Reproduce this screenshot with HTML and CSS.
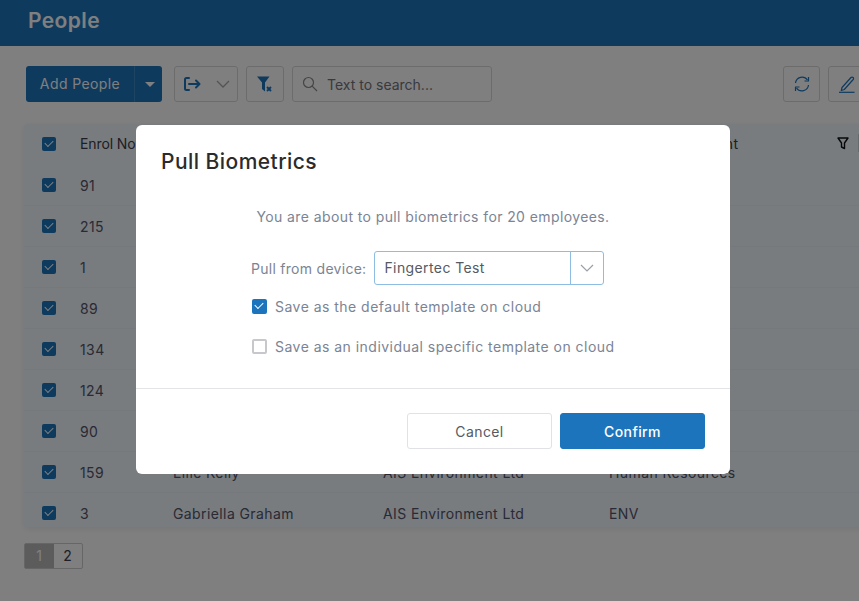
FILE: index.html
```html
<!DOCTYPE html>
<html lang="en">

<head>
  <meta charset="UTF-8">
  <meta name="viewport" content="width=device-width, initial-scale=1.0">
  <title>People</title>
  <link rel="stylesheet" href="styles.css">
</head>

<body>
  <header class="page-header">
    <h1>People</h1>
  </header>

  <main class="content">
    <div class="toolbar">
      <div class="split-btn">
        <span class="split-btn_label">Add People</span>
        <span class="split-btn_caret"></span>
      </div>
      <div class="tool-btn tool-btn--export">
        <svg width="20" height="16" viewBox="0 0 20 16" fill="none" stroke="#1c75bc" stroke-width="2" stroke-linecap="round" stroke-linejoin="round">
          <path d="M6 2H3.500C2.600 2 2 2.600 2 3.500v9c0 .9.6 1.500 1.500 1.500H6" />
          <path d="M6 8h10M13 4.500 16.500 8 13 11.500" />
        </svg>
        <svg width="14" height="8" viewBox="0 0 14 8" fill="none" stroke="#a8a8a8" stroke-width="1.300">
          <path d="M1 1l6 6 6-6" />
        </svg>
      </div>
      <div class="tool-btn tool-btn--filter">
        <svg width="18" height="18" viewBox="0 0 18 18">
          <path d="M1 1.500h12.500L9 7.500V16.500L6 14V7.500z" fill="#1c75bc" />
          <path d="M11 12l4 4M15 12l-4 4" stroke="#1c75bc" stroke-width="1.800" />
        </svg>
      </div>
      <div class="search">
        <svg width="16" height="16" viewBox="0 0 16 16" fill="none" stroke="#8a8a8a" stroke-width="1.200">
          <circle cx="6.500" cy="6.500" r="5" />
          <path d="M10.200 10.200 15 15" />
        </svg>
        <span>Text to search...</span>
      </div>
      <div class="toolbar_right">
        <div class="tool-btn tool-btn--square">
          <svg width="18" height="18" viewBox="0 0 18 18" fill="none" stroke="#1c75bc" stroke-width="1.200">
            <path d="M2.500 8A6.600 6.600 0 0 1 14.500 5" />
            <path d="M15.500 10A6.600 6.600 0 0 1 3.500 13" />
            <path d="M15.500 2v4h-4M2.500 16v-4h4" stroke-linejoin="round" />
          </svg>
        </div>
        <div class="tool-btn tool-btn--square">
          <svg width="18" height="18" viewBox="0 0 18 18" fill="none" stroke="#1c75bc" stroke-width="1.200">
            <path d="M4 12.500 13 2.500c.7-.6 1.500-.5 2.100 0s.6 1.400.1 2L6.300 14.500l-3 1z" stroke-linejoin="round" />
            <path d="M1 17.300h15.500" />
          </svg>
        </div>
      </div>
    </div>

    <div class="grid">
      <div class="grid_row grid_row--head">
        <span class="check"></span><span>Enrol No</span><span></span><span></span><span class="grid_wide">Home Department</span>
        <svg class="grid_filter" width="12" height="13" viewBox="0 0 12 13" fill="none" stroke="#111" stroke-width="1.400" stroke-linejoin="round">
          <path d="M1 1h10L7.500 6v5.500l-3-1.500V6z" />
        </svg>
        <span class="grid_resizer"></span>
      </div>
      <div class="grid_row"><span class="check"></span><span>91</span><span></span><span></span><span></span></div>
      <div class="grid_row"><span class="check"></span><span>215</span><span></span><span></span><span></span></div>
      <div class="grid_row"><span class="check"></span><span>1</span><span></span><span></span><span></span></div>
      <div class="grid_row"><span class="check"></span><span>89</span><span></span><span></span><span></span></div>
      <div class="grid_row"><span class="check"></span><span>134</span><span></span><span></span><span></span></div>
      <div class="grid_row"><span class="check"></span><span>124</span><span></span><span></span><span></span></div>
      <div class="grid_row"><span class="check"></span><span>90</span><span></span><span></span><span></span></div>
      <div class="grid_row"><span class="check"></span><span>159</span><span>Ellie Kelly</span><span>AIS Environment Ltd</span><span>Human Resources</span></div>
      <div class="grid_row"><span class="check"></span><span>3</span><span>Gabriella Graham</span><span>AIS Environment Ltd</span><span>ENV</span></div>
    </div>

    <div class="pager">
      <span class="pager_item pager_item--active">1</span>
      <span class="pager_item">2</span>
    </div>
  </main>

  <div class="overlay"></div>

  <section class="modal">
    <h2 class="modal_title">Pull Biometrics</h2>
    <div class="modal_body">
      <p class="modal_text">You are about to pull biometrics for 20 employees.</p>
      <div class="device-row">
        <label class="device-row_label">Pull from device:</label>
        <div class="select">
          <span class="select_value">Fingertec Test</span>
          <span class="select_arrow">
            <svg width="14" height="8" viewBox="0 0 14 8" fill="none" stroke="#9a9fa8" stroke-width="1.200">
              <path d="M1 1l6 6 6-6" />
            </svg>
          </span>
        </div>
      </div>
      <div class="option">
        <span class="check check--on"></span>
        <span>Save as the default template on cloud</span>
      </div>
      <div class="option">
        <span class="check check--off"></span>
        <span>Save as an individual specific template on cloud</span>
      </div>
    </div>
    <div class="modal_footer">
      <button class="btn">Cancel</button>
      <button class="btn btn--primary">Confirm</button>
    </div>
  </section>
</body>

</html>
```

FILE: styles.css
```css
* {
  box-sizing: border-box;
  padding: 0;
  margin: 0;
}

html {
  font-family: 'Inter', 'Open Sans', sans-serif;
  font-size: 14px;
  letter-spacing: 0.4px;
}

body {
  width: 859px;
  height: 601px;
  overflow: hidden;
  background-color: #ffffff;
  color: #4f4f60;
}

.page-header {
  height: 46px;
  padding: 8px 28px 0;
  background-color: #1c75bc;
}

.page-header h1 {
  font-size: 21px;
  line-height: 26px;
  font-weight: 600;
  color: #ffffff;
}

.content {
  width: 900px;
  padding: 20px 0 0 24px;
}

.toolbar {
  display: flex;
  gap: 8px;
  height: 36px;
  margin-left: 2px;
  margin-bottom: 22px;
}

.toolbar_right {
  display: flex;
  gap: 8px;
  margin-left: 283px;
}

.split-btn {
  display: flex;
  width: 136px;
  margin-right: 4px;
  border-radius: 3px;
  background-color: #1c75bc;
  color: #ffffff;
}

.split-btn_label {
  width: 109px;
  line-height: 36px;
  text-align: center;
  border-right: 1px solid #3a88c6;
}

.split-btn_caret {
  position: relative;
  flex: 1;
}

.split-btn_caret::after {
  content: "";
  position: absolute;
  left: 10px;
  top: 16px;
  border-left: 5px solid transparent;
  border-right: 5px solid transparent;
  border-top: 5px solid #ffffff;
}

.tool-btn {
  display: flex;
  align-items: center;
  justify-content: center;
  border: 1px solid #d9d9d9;
  border-radius: 3px;
}

.tool-btn--export {
  width: 64px;
  gap: 13px;
}

.tool-btn--filter {
  width: 38px;
}

.tool-btn--square {
  width: 37px;
}

.search {
  display: flex;
  align-items: center;
  gap: 9px;
  width: 200px;
  padding-left: 9px;
  border: 1px solid #d9d9d9;
  border-radius: 3px;
  letter-spacing: 0;
  color: #73737d;
}

.grid {
  width: 876px;
  height: 403px;
  overflow: hidden;
  border-radius: 4px;
  background-color: #f0f8ff;
  color: #54546a;
  box-shadow: 0 2px 6px rgba(0, 0, 0, 0.08);
}

.grid_row {
  position: relative;
  display: grid;
  grid-template-columns: 38px 93px 210px 226px 1fr;
  align-items: center;
  height: 41px;
  padding-left: 18px;
  border-bottom: 1px solid #ebf3fa;
}

.grid_row--head {
  padding-bottom: 2px;
  border-bottom: none;
  letter-spacing: -0.1px;
  color: #3c3c48;
}

.grid_wide {
  letter-spacing: 0.55px;
}

.grid_filter {
  position: absolute;
  left: 813px;
  top: 13px;
}

.grid_resizer {
  position: absolute;
  left: 834px;
  top: 10px;
  width: 1px;
  height: 18px;
  background-color: #cfd6dc;
}

.check {
  position: relative;
  display: block;
  width: 14px;
  height: 14px;
  border-radius: 2px;
  background-color: #1c75bc;
}

.check::after {
  content: "";
  position: absolute;
  left: 3px;
  top: 3px;
  width: 7px;
  height: 4px;
  border-left: 1.500px solid #ffffff;
  border-bottom: 1.500px solid #ffffff;
  transform: rotate(-45deg);
}

.check--off {
  border: 2px solid #c6c8cc;
  background-color: #ffffff;
}

.check--off::after {
  display: none;
}

.pager {
  display: flex;
  width: 59px;
  height: 26px;
  margin-top: 16px;
  border: 1px solid #cccccc;
  border-radius: 2px;
}

.pager_item {
  flex: 1;
  line-height: 24px;
  text-align: center;
  color: #3c3c48;
}

.pager_item--active {
  background-color: #b8b8b8;
  color: #ffffff;
}

.overlay {
  position: fixed;
  inset: 0;
  background-color: rgba(0, 0, 0, 0.5);
}

.modal {
  position: fixed;
  left: 136px;
  top: 125px;
  width: 594px;
  height: 349px;
  border-radius: 6px;
  background-color: #ffffff;
}

.modal_title {
  padding: 24px 25px 0;
  font-size: 21px;
  line-height: 26px;
  font-weight: 500;
  letter-spacing: 0.45px;
  color: #2b2b2b;
}

.modal_body {
  height: 214px;
  padding-top: 32px;
  border-bottom: 1px solid #e2e4e7;
  color: #7b8494;
}

.modal_text {
  line-height: 20px;
  text-align: center;
}

.device-row {
  display: flex;
  align-items: center;
  gap: 8px;
  margin-top: 24px;
  padding-left: 115px;
}

.device-row_label {
  letter-spacing: 0.28px;
}

.select {
  display: flex;
  width: 230px;
  height: 34px;
  border: 1px solid #8dbde3;
  border-radius: 3px;
}

.select_value {
  flex: 1;
  padding-left: 9px;
  line-height: 32px;
  color: #555a63;
}

.select_arrow {
  display: flex;
  align-items: center;
  justify-content: center;
  width: 33px;
  border-left: 1px solid #8dbde3;
}

.option {
  display: flex;
  align-items: center;
  gap: 8px;
  height: 20px;
  margin: 11px 0 20px 116px;
  letter-spacing: 0.47px;
}

.option .check {
  width: 15px;
  height: 15px;
}

.modal_footer {
  display: flex;
  justify-content: flex-end;
  gap: 8px;
  padding: 24px 25px 0;
}

.btn {
  width: 145px;
  height: 36px;
  border: 1px solid #e0e2e6;
  border-radius: 3px;
  background-color: #ffffff;
  font-family: inherit;
  font-size: 14px;
  letter-spacing: inherit;
  color: #555a63;
}

.btn--primary {
  border-color: #1c75bc;
  background-color: #1c75bc;
  font-weight: 500;
  color: #ffffff;
}
```
